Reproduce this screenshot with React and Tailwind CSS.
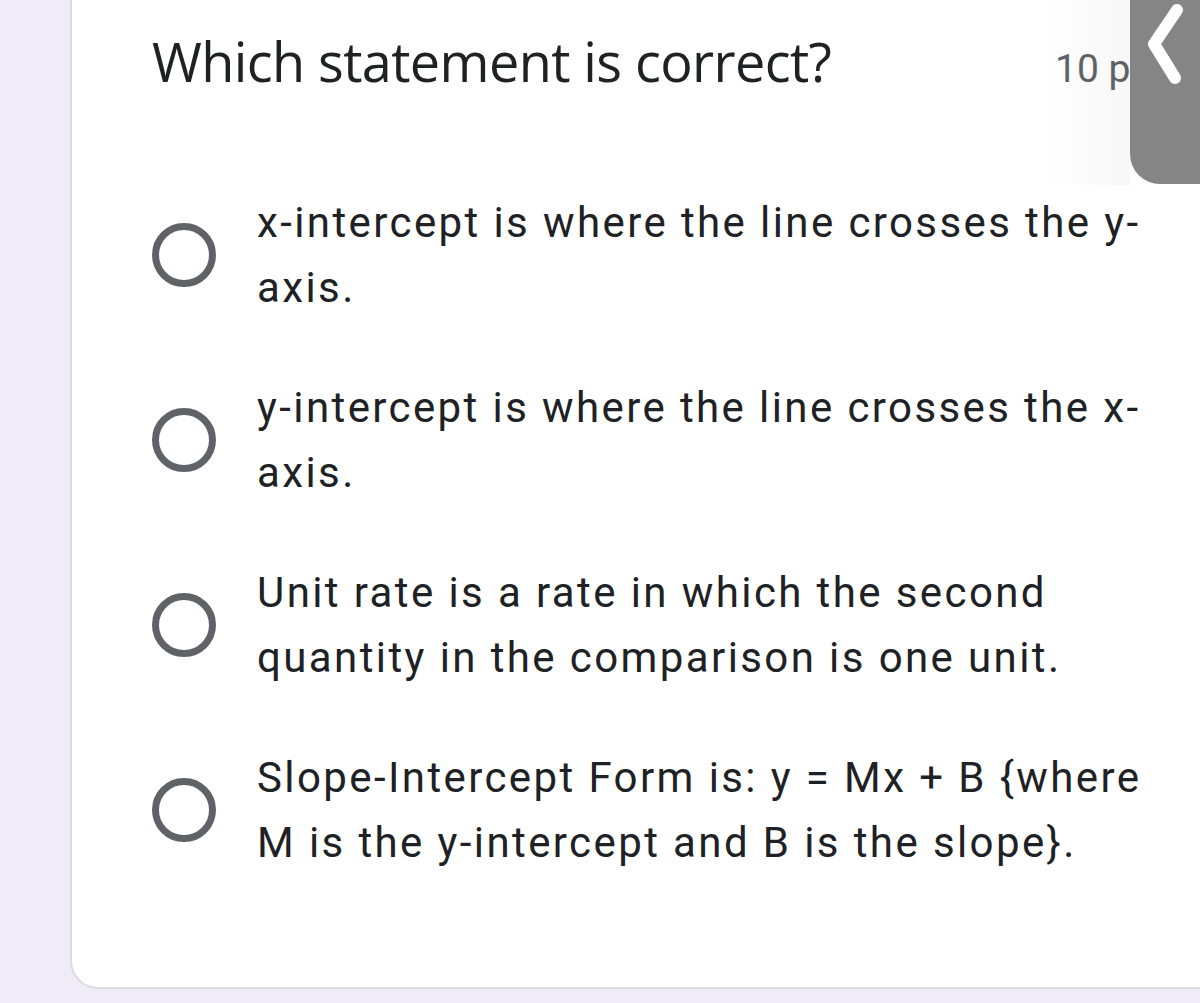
import React from "react";

const options = [
  "x-intercept is where the line crosses the y-axis.",
  "y-intercept is where the line crosses the x-axis.",
  "Unit rate is a rate in which the second quantity in the comparison is one unit.",
  "Slope-Intercept Form is: y = Mx + B {where M is the y-intercept and B is the slope}.",
];

function Radio() {
  return (
    <span className="shrink-0 w-16 h-16 rounded-full border-[7px] border-[#5f6368] bg-white" />
  );
}

export default function App() {
  return (
    <div className="relative w-[1200px] h-[1003px] overflow-hidden bg-[#efecf7]">
      {/* question card */}
      <div className="ml-[70px] mr-[-40px] bg-white border-l-2 border-b-2 border-[#dcdbe3] rounded-bl-[28px] pt-[29px] pb-[112px] pl-[80px]">
        <div className="grid grid-cols-[903px_auto] items-baseline">
          <h1 className="text-[54px] leading-[64px] tracking-[-0.6px] text-[#202124] font-['Open_Sans',sans-serif]">
            Which statement is correct?
          </h1>
          <span className="text-[39px] leading-[64px] text-[#5f6368] font-['Roboto',sans-serif] whitespace-nowrap">
            10 points
          </span>
        </div>

        <div className="mt-[89px] flex flex-col gap-[55px]">
          {options.map((opt) => (
            <label key={opt} className="flex items-center gap-[41px]">
              <Radio />
              <span className="w-[900px] text-[42px] leading-[65px] tracking-[2.4px] text-[#202124] font-['Roboto',sans-serif]">
                {opt}
              </span>
            </label>
          ))}
        </div>
      </div>

      {/* side drawer handle */}
      <div className="absolute top-0 right-[70px] w-[90px] h-[185px] bg-gradient-to-r from-transparent to-black/[0.03]" />
      <div className="absolute top-0 right-0 w-[70px] h-[184px] bg-[#858585] rounded-bl-[30px]">
        <svg width="70" height="90" viewBox="0 0 70 90" className="block">
          <path
            d="M47 10 L24 44 L45 78"
            fill="none"
            stroke="#fff"
            strokeWidth="12"
            strokeLinecap="round"
            strokeLinejoin="round"
          />
        </svg>
      </div>
    </div>
  );
}
